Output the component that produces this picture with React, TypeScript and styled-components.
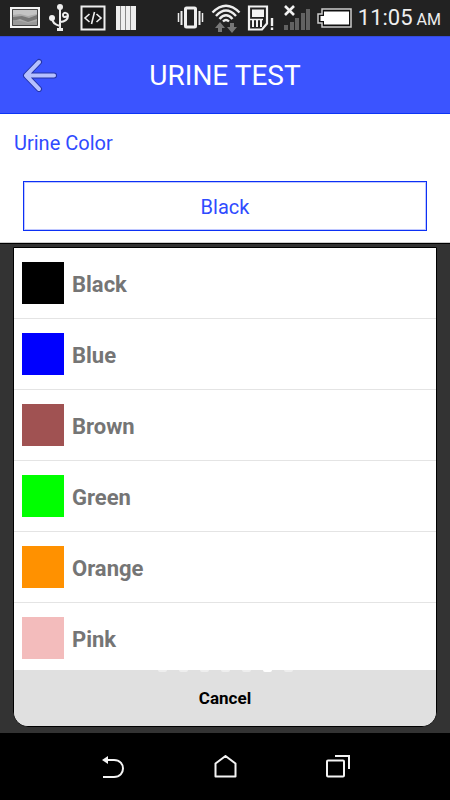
import React, { useState } from "react";
import styled, { createGlobalStyle } from "styled-components";

const GlobalStyle = createGlobalStyle`
  * { box-sizing: border-box; }
  body { margin: 0; background: #000; font-family: Roboto, "Liberation Sans", sans-serif; }
  button { font-family: inherit; cursor: pointer; }
  svg { display: block; flex: none; }
`;

const Screen = styled.div`
  display: flex;
  flex-direction: column;
  min-height: 100vh;
`;

const StatusBar = styled.div`
  display: flex;
  align-items: center;
  justify-content: space-between;
  height: 36px;
  padding: 0 9px 0 10px;
  background: #222;
  color: #eee;
`;

const StatusGroup = styled.div<{ $gap: number }>`
  display: flex;
  align-items: center;
  gap: ${(p) => p.$gap}px;
`;

const Clock = styled.time`
  padding-top: 2px;
  font-size: 22px;
  line-height: 28px;
  white-space: nowrap;
`;

const Meridiem = styled.span`
  margin-left: 4px;
  font-size: 16px;
`;

const Header = styled.header`
  display: grid;
  grid-template-columns: 56px 1fr 56px;
  align-items: center;
  height: 78px;
  background: #3b54ff;
  border-top: 1px solid #344bdc;
  border-bottom: 1px solid #0c35f5;
`;

const BackButton = styled.button`
  display: flex;
  padding: 0 0 0 22px;
  border: 0;
  background: none;
`;

const Title = styled.h1`
  margin: 0;
  padding-top: 2px;
  color: #fff;
  font-size: 28px;
  line-height: 36px;
  font-weight: 400;
  text-align: center;
`;

const Form = styled.section`
  padding: 16px 23px 11px;
  background: #fff;
  border-bottom: 1px solid #ccc;
`;

const FieldLabel = styled.label`
  display: block;
  margin: 0 0 25px -9px;
  color: #2f4bff;
  font-size: 20px;
  line-height: 26px;
`;

const FieldButton = styled.button`
  display: block;
  width: 100%;
  height: 50px;
  padding: 2px 0 0;
  border: 1px solid #0c30f5;
  outline: 1px solid #c0c8ff;
  outline-offset: -2px;
  background: #fff;
  color: #2f4bff;
  font-size: 20px;
`;

const Backdrop = styled.main`
  display: flex;
  flex: 1;
  flex-direction: column;
  padding: 3px 13px 6px;
  background: #333;
  border-top: 1px solid #000;
`;

const Dialog = styled.div`
  display: flex;
  flex: 1;
  flex-direction: column;
  overflow: hidden;
  background: #e0e0e0;
  border: 1px solid #000;
  border-radius: 0 0 15px 15px;
`;

const ColorList = styled.ul`
  flex: 1 1 0;
  min-height: 0;
  margin: 0;
  padding: 0;
  overflow: hidden;
  background: #fff;
  list-style: none;
`;

const ColorItem = styled.li`
  border-bottom: 1px solid #e4e4e4;
`;

const ColorButton = styled.button`
  display: flex;
  align-items: center;
  gap: 8px;
  width: 100%;
  height: 70px;
  padding: 0 8px;
  border: 0;
  background: none;
  color: #757575;
  text-align: left;
`;

const Swatch = styled.span<{ $color: string }>`
  width: 42px;
  height: 42px;
  background: ${(p) => p.$color};
`;

const ColorName = styled.span`
  padding-top: 4px;
  font-size: 22px;
  line-height: 28px;
  font-weight: 700;
`;

const DialogFooter = styled.div`
  position: relative;
  height: 56px;
`;

const PageDots = styled.div`
  position: absolute;
  top: 0;
  left: 0;
  right: 0;
  display: flex;
  justify-content: center;
  gap: 12px;
  pointer-events: none;
`;

const Dot = styled.span<{ $active: boolean }>`
  width: 9px;
  height: 2px;
  border-radius: 0 0 5px 5px;
  background: ${(p) => (p.$active ? "#fff" : "#eee")};
`;

const CancelButton = styled.button`
  width: 100%;
  height: 100%;
  padding: 0;
  border: 0;
  background: #e0e0e0;
  color: #000;
  font-size: 17px;
  font-weight: 700;
`;

const NavBar = styled.nav`
  display: flex;
  justify-content: center;
  gap: 56px;
  height: 67px;
  background: #000;
`;

const NavButton = styled.button`
  display: flex;
  align-items: center;
  justify-content: center;
  width: 57px;
  padding: 0;
  border: 0;
  background: none;
`;

const colors = [
  { name: "Black", value: "#000000" },
  { name: "Blue", value: "#0000ff" },
  { name: "Brown", value: "#a05252" },
  { name: "Green", value: "#00ff00" },
  { name: "Orange", value: "#ff9100" },
  { name: "Pink", value: "#f3bcbc" },
];

const PictureIcon = () => (
  <svg width="30" height="22" viewBox="0 0 30 22">
    <rect x="1" y="1" width="28" height="19" fill="#aaa" stroke="#f4f4f4" strokeWidth="2" />
    <path d="M3 3h24v4L18 9 10 7 3 8z" fill="#c4c4c4" />
    <path d="M3 10l9-1 7 2 8-3v4l-9 3-8-3-7 2z" fill="#777" />
    <path d="M3 13l8 1 7 2 9-2v4H3z" fill="#999" />
    <path d="M2.500 2.500h25v16h-25z" fill="none" stroke="#444" />
  </svg>
);

const UsbIcon = () => (
  <svg width="22" height="28" viewBox="0 0 22 28" fill="none" stroke="#eee" strokeWidth="2">
    <path d="M11 4v20M3 14c0 5 4 7 8 8M11 18c5 0 8-3 8-6 0-4-5-4-5-1 0 2 2 3 4 1" />
    <circle cx="11" cy="3" r="3" fill="#eee" stroke="none" />
    <circle cx="3" cy="14" r="3" fill="#eee" stroke="none" />
    <path d="M8 25.500h6" strokeWidth="3" />
  </svg>
);

const CodeIcon = () => (
  <svg width="26" height="26" viewBox="0 0 26 26" fill="none" stroke="#eee">
    <rect x="1.500" y="1.500" width="23" height="23" fill="#181818" strokeWidth="2" />
    <path d="M9.500 9L5 13l4.500 4M16.500 9l4.500 4-4.500 4M14.500 7l-3 12" strokeWidth="1.600" />
  </svg>
);

const BarsIcon = () => (
  <svg width="22" height="26" viewBox="0 0 22 26">
    <path d="M1 1h20v24H1z" fill="#888" />
    <path d="M1 1h4v24H1zM6 1h4v24H6zM11 1h4v24h-4zM16 1h5v24h-5z" fill="#eee" />
  </svg>
);

const VibrateIcon = () => (
  <svg width="28" height="26" viewBox="0 0 28 26" fill="none" stroke="#eee">
    <rect x="8.500" y="3" width="10" height="19" rx="1" strokeWidth="3" />
    <path d="M4.500 6v14M22.500 6v14" strokeWidth="2" />
    <path d="M1.500 8v9M25.500 8v9" strokeWidth="1.500" />
  </svg>
);

const WifiIcon = () => (
  <svg width="30" height="32" viewBox="0 0 30 32" fill="none" stroke="#eee" strokeWidth="2.400">
    <path d="M1.500 10.500Q15-3 28.500 10.500M5 14Q15 3 25 14M8.500 17Q15 9.500 21.500 17M12 19.500q3-3 6 0" />
    <path d="M9 20l5 6h-3v4H7v-4H4zM21 31l-5-6h3v-4h4v4h3z" fill="#777" stroke="none" />
  </svg>
);

const SimIcon = () => (
  <svg width="30" height="26" viewBox="0 0 30 26" fill="none" stroke="#f2f2f2">
    <path d="M2 1.500h18v17l-5 6H2z" strokeWidth="2.200" />
    <path d="M5 4.500h12v7.500H5z" fill="#f2f2f2" stroke="none" />
    <path d="M6 15v7M10 15v7M14 15v7" strokeWidth="2" />
    <path d="M3 14.500h13" strokeWidth="1.500" />
    <path d="M25 13v8M25 22.500v2.500" strokeWidth="2.400" />
  </svg>
);

const SignalIcon = () => (
  <svg width="28" height="26" viewBox="0 0 28 26">
    <path d="M1 20h4v5H1zM7 17h4v8H7zM12 13h4v12h-4zM18 8h4v17h-4zM23 4h4v21h-4z" fill="#626262" />
    <path d="M2 1l9 9M11 1l-9 9" stroke="#f2f2f2" strokeWidth="2.600" />
  </svg>
);

const BatteryIcon = () => (
  <svg width="35" height="20" viewBox="0 0 35 20">
    <path d="M5 1h29v18H5v-4H1V6h4z" fill="#111" stroke="#ccc" strokeWidth="1.500" />
    <path d="M7 3.500h25v13H7V13H3.500V8H7z" fill="#fff" />
  </svg>
);

const BackArrow = () => (
  <svg width="36" height="34" viewBox="0 0 36 34" fill="none" strokeLinecap="round" strokeLinejoin="round">
    <path d="M17 4L4 17.500 17 31M4 17.500h28" stroke="#2434a6" strokeWidth="6" />
    <path d="M17 4L4 17.500 17 31M4 17.500h28" stroke="#b5c0ff" strokeWidth="4" />
  </svg>
);

const BackIcon = () => (
  <svg width="25" height="24" viewBox="0 0 25 24" fill="none" stroke="#f4f4f4" strokeWidth="2">
    <path d="M7 5h7c12 0 12 17 0 17H3" />
    <path d="M2 5l6-4v8z" fill="#f4f4f4" stroke="none" />
  </svg>
);

const HomeIcon = () => (
  <svg width="23" height="23" viewBox="0 0 23 23" fill="none" stroke="#f4f4f4" strokeWidth="2">
    <path d="M1.500 8.500L11.500 1l10 7.500v13h-20z" strokeLinejoin="round" />
  </svg>
);

const RecentsIcon = () => (
  <svg width="24" height="23" viewBox="0 0 24 23" fill="none" stroke="#f4f4f4" strokeWidth="2">
    <rect x="1" y="5.500" width="17" height="16" rx="1" />
    <path d="M9 1h14v13" />
  </svg>
);

export default function App() {
  const [selected, setSelected] = useState("Black");

  return (
    <>
      <GlobalStyle />
      <Screen>
        <StatusBar>
          <StatusGroup $gap={9}>
            <PictureIcon />
            <UsbIcon />
            <CodeIcon />
            <BarsIcon />
          </StatusGroup>
          <StatusGroup $gap={6}>
            <VibrateIcon />
            <WifiIcon />
            <SimIcon />
            <SignalIcon />
            <BatteryIcon />
            <Clock>
              11:05<Meridiem>AM</Meridiem>
            </Clock>
          </StatusGroup>
        </StatusBar>
        <Header>
          <BackButton aria-label="Back">
            <BackArrow />
          </BackButton>
          <Title>URINE TEST</Title>
        </Header>
        <Form>
          <FieldLabel htmlFor="urine-color">Urine Color</FieldLabel>
          <FieldButton id="urine-color" aria-haspopup="dialog">
            {selected}
          </FieldButton>
        </Form>
        <Backdrop>
          <Dialog role="dialog" aria-label="Urine Color">
            <ColorList>
              {colors.map((c) => (
                <ColorItem key={c.name}>
                  <ColorButton onClick={() => setSelected(c.name)}>
                    <Swatch $color={c.value} />
                    <ColorName>{c.name}</ColorName>
                  </ColorButton>
                </ColorItem>
              ))}
            </ColorList>
            <DialogFooter>
              <CancelButton>Cancel</CancelButton>
              <PageDots>
                {[0, 1, 2, 3, 4, 5, 6].map((i) => (
                  <Dot key={i} $active={i === 5} />
                ))}
              </PageDots>
            </DialogFooter>
          </Dialog>
        </Backdrop>
        <NavBar>
          <NavButton aria-label="Back">
            <BackIcon />
          </NavButton>
          <NavButton aria-label="Home">
            <HomeIcon />
          </NavButton>
          <NavButton aria-label="Recent apps">
            <RecentsIcon />
          </NavButton>
        </NavBar>
      </Screen>
    </>
  );
}
